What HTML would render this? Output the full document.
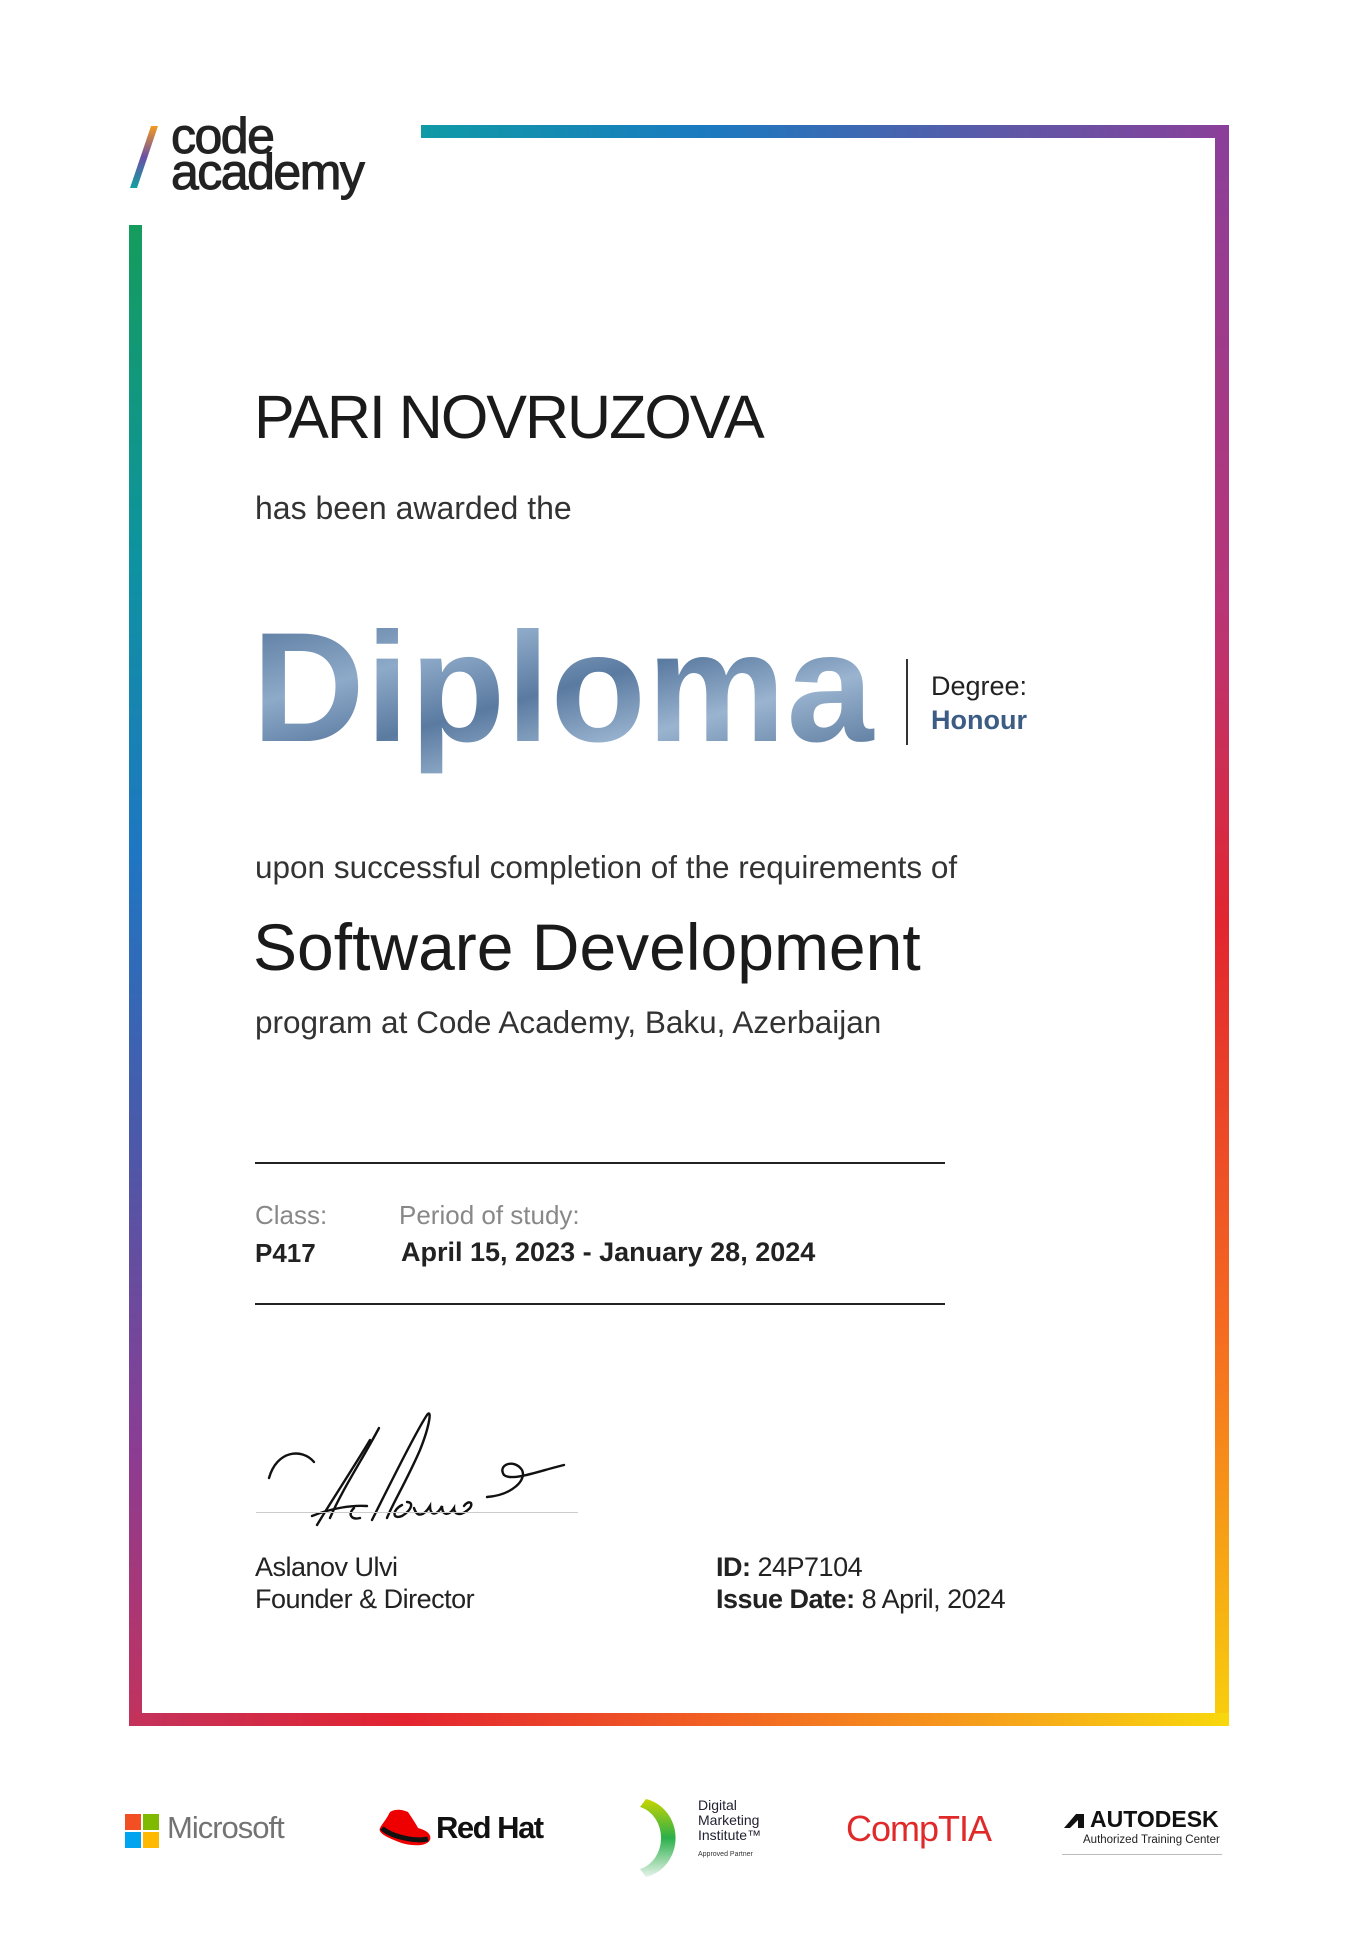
<!DOCTYPE html>
<html><head><meta charset="utf-8"><style>
*{margin:0;padding:0;box-sizing:border-box}
body{width:1359px;height:1949px;background:#fff;position:relative;overflow:hidden;font-family:"Liberation Sans",sans-serif;color:#1e1e1e}
.a{position:absolute;white-space:nowrap}
.bar{position:absolute}
</style></head><body>
<!-- frame -->
<div class="bar" style="left:421px;top:125px;width:808px;height:13px;background:linear-gradient(90deg,#0f9aa6,#1a7ac0 35%,#5a5aa8 70%,#8a3f9a)"></div>
<div class="bar" style="left:1215px;top:125px;width:14px;height:1601px;background:linear-gradient(180deg,#8a3f9a,#b83577 30%,#e2262f 50%,#f56a20 75%,#f8d00c)"></div>
<div class="bar" style="left:129px;top:225px;width:13px;height:1501px;background:linear-gradient(180deg,#159c5c,#0e93a0 22%,#1f76c2 42%,#4e57a8 62%,#8c3c92 82%,#c3325c)"></div>
<div class="bar" style="left:129px;top:1713px;width:1100px;height:13px;background:linear-gradient(90deg,#c3325c,#e32330 25%,#f26522 55%,#f7a51a 80%,#f8d80c)"></div>

<!-- logo -->
<svg class="a" style="left:127px;top:124px" width="34" height="66"><defs><linearGradient id="sl" x1="0" y1="1" x2="0" y2="0"><stop offset="0" stop-color="#12a0a0"/><stop offset=".5" stop-color="#6a4fa8"/><stop offset="1" stop-color="#f39a1e"/></linearGradient></defs><polygon points="24,2 31,2 10,64 3,64" fill="url(#sl)"/></svg>
<div class="a" style="left:171px;top:118px;font-size:50px;line-height:36px;letter-spacing:-1.5px;color:#222;-webkit-text-stroke:1px #222">code<br>academy</div>

<div class="a" style="left:254px;top:382px;font-size:61px;letter-spacing:-2px;color:#1a1a1a">PARI NOVRUZOVA</div>
<div class="a" style="left:255px;top:490px;font-size:32px;color:#333">has been awarded the</div>

<svg class="a" style="left:245px;top:600px" width="660" height="180"><defs><linearGradient id="dg" x1="0" y1="0" x2="1" y2="1"><stop offset="0" stop-color="#4e6f95"/><stop offset=".3" stop-color="#8eaac9"/><stop offset=".5" stop-color="#5a7aa0"/><stop offset=".7" stop-color="#9ab4d0"/><stop offset="1" stop-color="#4a6a90"/></linearGradient></defs><text x="7" y="141" font-family="Liberation Sans" font-weight="bold" font-size="156" fill="url(#dg)" letter-spacing="1">Diploma</text></svg>
<div class="bar" style="left:906px;top:659px;width:2px;height:86px;background:#333"></div>
<div class="a" style="left:931px;top:671px;font-size:27px;color:#222">Degree:</div>
<div class="a" style="left:931px;top:705px;font-size:27px;font-weight:bold;color:#3d5c85">Honour</div>

<div class="a" style="left:255px;top:849px;font-size:31.5px;color:#333">upon successful completion of the requirements of</div>
<div class="a" style="left:253px;top:909px;font-size:66px;color:#1a1a1a">Software Development</div>
<div class="a" style="left:255px;top:1004px;font-size:31.5px;color:#333">program at Code Academy, Baku, Azerbaijan</div>

<div class="bar" style="left:255px;top:1162px;width:690px;height:2px;background:#222"></div>
<div class="a" style="left:255px;top:1200px;font-size:26px;color:#888">Class:</div>
<div class="a" style="left:399px;top:1200px;font-size:26px;color:#888">Period of study:</div>
<div class="a" style="left:255px;top:1238px;font-size:26px;font-weight:bold;color:#222">P417</div>
<div class="a" style="left:401px;top:1237px;font-size:27px;font-weight:bold;color:#222">April 15, 2023 - January 28, 2024</div>
<div class="bar" style="left:255px;top:1303px;width:690px;height:2px;background:#222"></div>

<svg class="a" style="left:242px;top:1390px" width="360" height="140" fill="none" stroke="#111" stroke-width="2.4" stroke-linecap="round">
<path d="M27 88 C35 60 60 58 72 72"/>
<path d="M128 50 C110 80 90 110 75 135"/>
<path d="M137 38 C120 70 100 100 88 128"/>
<path d="M70 126 C90 118 110 115 125 116"/>
<path d="M112 118 C105 125 110 130 118 128"/>
<path d="M130 130 C150 90 175 40 185 25 C190 18 188 35 178 60 C165 90 150 115 145 128"/>
<path d="M160 115 C150 120 150 130 160 126 C170 120 172 112 165 112 M172 118 C175 128 182 126 188 116 C188 126 195 126 200 116 C200 126 207 126 212 118 C212 126 220 126 228 118 C232 112 226 110 222 116"/>
<path d="M245 107 C270 105 285 90 280 80 C272 68 255 75 262 85 C270 92 300 80 322 75"/>
</svg>
<div class="bar" style="left:256px;top:1512px;width:322px;height:1px;background:#ccc"></div>

<div class="a" style="left:255px;top:1552px;font-size:27px;color:#222;letter-spacing:-.5px">Aslanov Ulvi</div>
<div class="a" style="left:255px;top:1584px;font-size:27px;color:#222;letter-spacing:-.5px">Founder &amp; Director</div>
<div class="a" style="left:716px;top:1552px;font-size:27px;color:#222;letter-spacing:-.5px"><b>ID:</b> 24P7104</div>
<div class="a" style="left:716px;top:1584px;font-size:27px;color:#222;letter-spacing:-.5px"><b>Issue Date:</b> 8 April, 2024</div>

<!-- partner logos -->
<div class="a" style="left:125px;top:1814px;width:16px;height:16px;background:#f25022"></div>
<div class="a" style="left:143px;top:1814px;width:16px;height:16px;background:#7fba00"></div>
<div class="a" style="left:125px;top:1832px;width:16px;height:16px;background:#00a4ef"></div>
<div class="a" style="left:143px;top:1832px;width:16px;height:16px;background:#ffb900"></div>
<div class="a" style="left:167px;top:1810px;font-size:31px;color:#737373;letter-spacing:-1px">Microsoft</div>

<svg class="a" style="left:376px;top:1806px" width="60" height="46"><path d="M14 6 C20 2 28 4 32 6 C36 12 40 18 42 22 C50 24 56 28 54 34 C50 42 30 40 18 34 C8 30 2 26 4 22 C6 18 10 14 14 6Z" fill="#e00"/><path d="M6 22 C14 30 38 36 52 33" stroke="#111" stroke-width="5" fill="none"/></svg>
<div class="a" style="left:436px;top:1810px;font-size:31px;font-weight:bold;color:#111;letter-spacing:-1.5px">Red Hat</div>

<svg class="a" style="left:626px;top:1797px" width="60" height="82"><defs><linearGradient id="dm" x1="0" y1="0" x2="0" y2="1"><stop offset="0" stop-color="#c8d400"/><stop offset=".5" stop-color="#2bb04a"/><stop offset="1" stop-color="#e6f3ea"/></linearGradient></defs><path d="M20 2 A38 40 0 0 1 20 80 L14 72 A28 32 0 0 0 14 10Z" fill="url(#dm)"/></svg>
<div class="a" style="left:698px;top:1798px;font-size:14px;line-height:15px;color:#223">Digital<br>Marketing<br>Institute™</div>
<div class="a" style="left:698px;top:1851px;font-size:7px;color:#333">Approved Partner</div>

<div class="a" style="left:846px;top:1808px;font-size:36px;color:#e02a2a;letter-spacing:-1px">CompTIA</div>

<svg class="a" style="left:1062px;top:1812px" width="24" height="18"><path d="M2 16 L14 2 L22 2 L22 16 L16 16 L16 8 L8 16Z" fill="#111"/></svg>
<div class="a" style="left:1090px;top:1806px;font-size:23px;font-weight:bold;color:#111">AUTODESK</div>
<div class="a" style="left:1083px;top:1834px;font-size:11.5px;color:#222">Authorized Training Center</div>
<div class="bar" style="left:1062px;top:1854px;width:160px;height:1px;background:#bbb"></div>
</body></html>
